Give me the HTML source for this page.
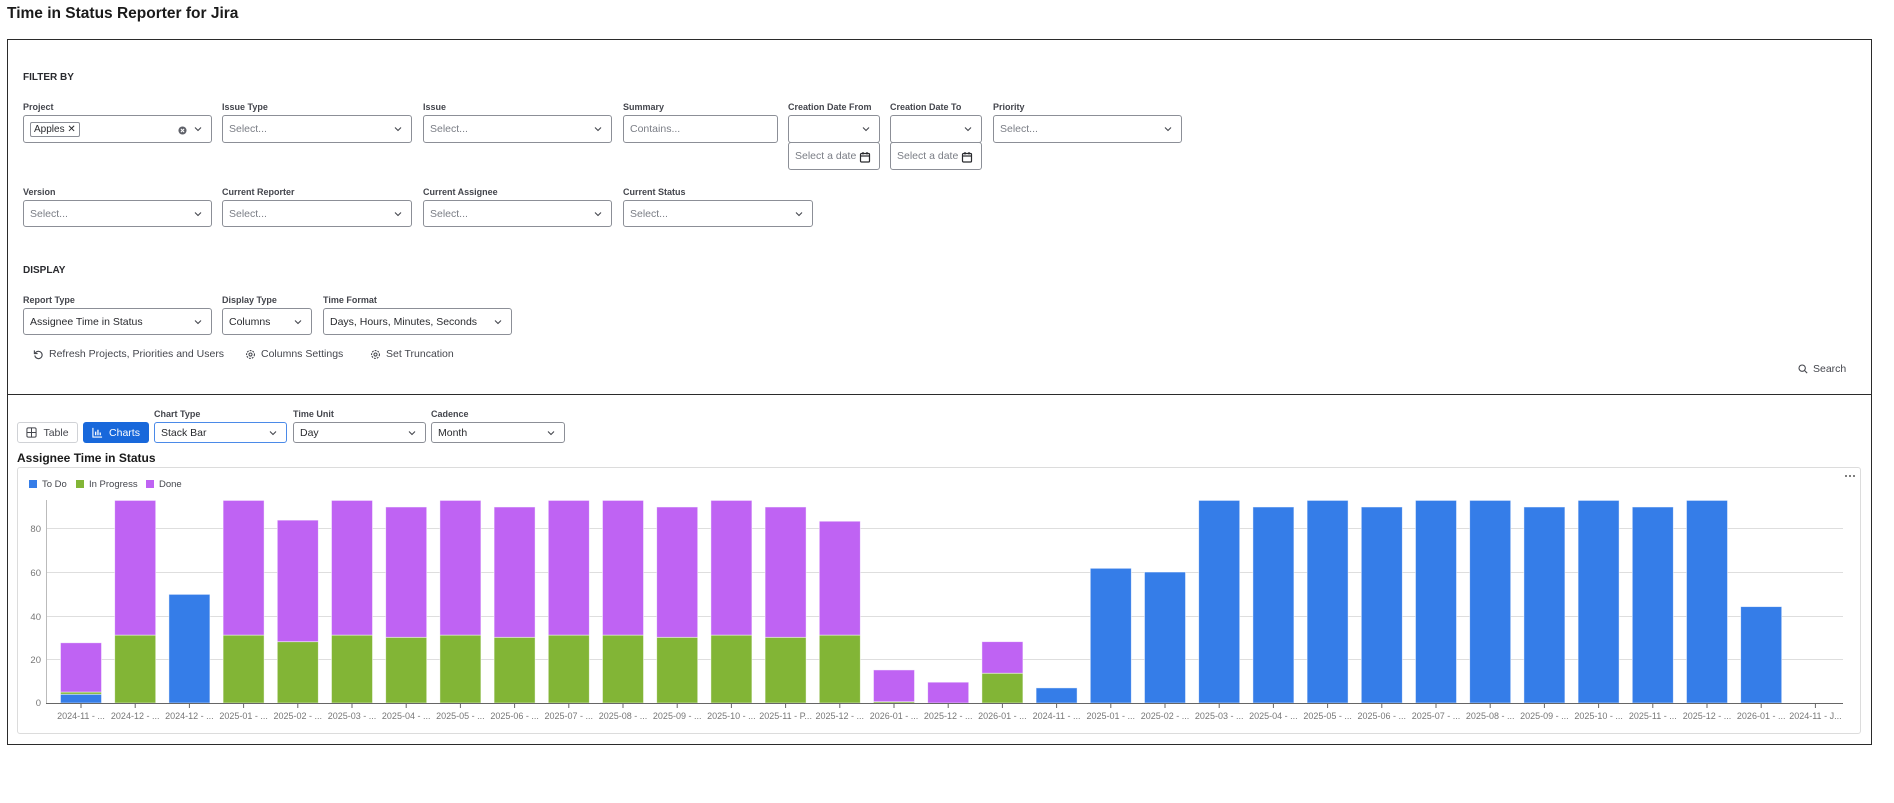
<!DOCTYPE html>
<html><head><meta charset="utf-8">
<style>
*{box-sizing:border-box}
body{margin:0;width:1894px;height:803px;background:#fff;font-family:"Liberation Sans",sans-serif;color:#172b4d;position:relative;overflow:hidden}
.a{position:absolute}
.h1{left:7px;top:5px;font-size:15.5px;font-weight:bold;color:#1a1a1a}
.panel{position:absolute;left:7px;width:1865px;border:1px solid #2b2b2b}
.sec{font-size:10px;font-weight:bold;color:#292a2e}
.lbl{font-size:9px;font-weight:600;color:#44464d}
.in{position:absolute;border:1px solid #8c8f97;border-radius:3px;background:#fff;font-size:10.5px;color:#7a7d85;padding-left:6px;display:flex;align-items:center}
.in.dark{color:#292a2e}
.chev{position:absolute;right:9px;top:50%;margin-top:-3px;width:8px;height:6px}
.act{font-size:10.5px;color:#44464d;display:flex;align-items:center;gap:5px}
.btn{position:absolute;border-radius:3px;font-size:10.5px;display:flex;align-items:center;justify-content:center;gap:6px}
</style></head><body>
<div class="a h1">Time in Status Reporter for Jira</div>

<div class="panel" style="top:39px;height:356px"></div>
<div class="panel" style="top:394px;height:351px"></div>

<div class="a sec" style="left:23px;top:72px">FILTER BY</div>

<div class="a lbl" style="left:23px;top:102px">Project</div>
<div class="a lbl" style="left:222px;top:102px">Issue Type</div>
<div class="a lbl" style="left:423px;top:102px">Issue</div>
<div class="a lbl" style="left:623px;top:102px">Summary</div>
<div class="a lbl" style="left:788px;top:102px">Creation Date From</div>
<div class="a lbl" style="left:890px;top:102px">Creation Date To</div>
<div class="a lbl" style="left:993px;top:102px">Priority</div>

<svg width="0" height="0" style="position:absolute"><defs><symbol id="cv" viewBox="0 0 8 6"><path d="M1 1.5 L4 4.5 L7 1.5" fill="none" stroke="#44464d" stroke-width="1.1"/></symbol><symbol id="cal" viewBox="0 0 12 12"><rect x="1.5" y="2.5" width="9" height="8.5" rx="1" fill="none" stroke="#292a2e" stroke-width="1.2"/><line x1="1.5" y1="5" x2="10.5" y2="5" stroke="#292a2e" stroke-width="1.2"/><line x1="4" y1="1" x2="4" y2="3.5" stroke="#292a2e" stroke-width="1.2"/><line x1="8" y1="1" x2="8" y2="3.5" stroke="#292a2e" stroke-width="1.2"/></symbol></defs></svg>

<div class="in" style="left:23px;top:115px;width:189px;height:28px"><span style="border:1px solid #8c8f97;border-radius:2px;padding:1px 3px;color:#292a2e;font-size:10px">Apples ✕</span>
<svg style="position:absolute;right:24px;top:10px" width="9" height="9" viewBox="0 0 10 10"><circle cx="5" cy="5" r="4.5" fill="#5e6068"/><path d="M3.2 3.2L6.8 6.8M6.8 3.2L3.2 6.8" stroke="#fff" stroke-width="1.2"/></svg>
<svg class="chev"><use href="#cv"/></svg></div>
<div class="in" style="left:222px;top:115px;width:190px;height:28px">Select...<svg class="chev"><use href="#cv"/></svg></div>
<div class="in" style="left:423px;top:115px;width:189px;height:28px">Select...<svg class="chev"><use href="#cv"/></svg></div>
<div class="in" style="left:623px;top:115px;width:155px;height:28px">Contains...</div>
<div class="in" style="left:788px;top:115px;width:92px;height:28px"><svg class="chev"><use href="#cv"/></svg></div>
<div class="in" style="left:890px;top:115px;width:92px;height:28px"><svg class="chev"><use href="#cv"/></svg></div>
<div class="in" style="left:993px;top:115px;width:189px;height:28px">Select...<svg class="chev"><use href="#cv"/></svg></div>
<div class="in" style="left:788px;top:142px;width:92px;height:28px">Select a date<svg style="position:absolute;right:8px;top:8px" width="12" height="12"><use href="#cal"/></svg></div>
<div class="in" style="left:890px;top:142px;width:92px;height:28px">Select a date<svg style="position:absolute;right:8px;top:8px" width="12" height="12"><use href="#cal"/></svg></div>

<div class="a lbl" style="left:23px;top:187px">Version</div>
<div class="a lbl" style="left:222px;top:187px">Current Reporter</div>
<div class="a lbl" style="left:423px;top:187px">Current Assignee</div>
<div class="a lbl" style="left:623px;top:187px">Current Status</div>
<div class="in" style="left:23px;top:200px;width:189px;height:27px">Select...<svg class="chev"><use href="#cv"/></svg></div>
<div class="in" style="left:222px;top:200px;width:190px;height:27px">Select...<svg class="chev"><use href="#cv"/></svg></div>
<div class="in" style="left:423px;top:200px;width:189px;height:27px">Select...<svg class="chev"><use href="#cv"/></svg></div>
<div class="in" style="left:623px;top:200px;width:190px;height:27px">Select...<svg class="chev"><use href="#cv"/></svg></div>

<div class="a sec" style="left:23px;top:265px">DISPLAY</div>
<div class="a lbl" style="left:23px;top:295px">Report Type</div>
<div class="a lbl" style="left:222px;top:295px">Display Type</div>
<div class="a lbl" style="left:323px;top:295px">Time Format</div>
<div class="in dark" style="left:23px;top:308px;width:189px;height:27px">Assignee Time in Status<svg class="chev"><use href="#cv"/></svg></div>
<div class="in dark" style="left:222px;top:308px;width:90px;height:27px">Columns<svg class="chev"><use href="#cv"/></svg></div>
<div class="in dark" style="left:323px;top:308px;width:189px;height:27px">Days, Hours, Minutes, Seconds<svg class="chev"><use href="#cv"/></svg></div>

<div class="a act" style="left:33px;top:348px"><svg width="11" height="11" viewBox="0 0 12 12"><path d="M2.5 4.5A4 4 0 1 1 2 7" fill="none" stroke="#44464d" stroke-width="1.2"/><path d="M1.5 1.5V5H5" fill="none" stroke="#44464d" stroke-width="1.2"/></svg>Refresh Projects, Priorities and Users</div>
<div class="a act" style="left:245px;top:348px"><svg width="11" height="11" viewBox="0 0 12 12"><circle cx="6" cy="6" r="4.3" fill="none" stroke="#44464d" stroke-width="1.2" stroke-dasharray="2 1.2"/><circle cx="6" cy="6" r="1.7" fill="none" stroke="#44464d" stroke-width="1.1"/></svg>Columns Settings</div>
<div class="a act" style="left:370px;top:348px"><svg width="11" height="11" viewBox="0 0 12 12"><circle cx="6" cy="6" r="4.3" fill="none" stroke="#44464d" stroke-width="1.2" stroke-dasharray="2 1.2"/><circle cx="6" cy="6" r="1.7" fill="none" stroke="#44464d" stroke-width="1.1"/></svg>Set Truncation</div>
<div class="a act" style="left:1798px;top:363px"><svg width="10" height="10" viewBox="0 0 12 12"><circle cx="5" cy="5" r="3.8" fill="none" stroke="#44464d" stroke-width="1.3"/><path d="M8 8L11 11" stroke="#44464d" stroke-width="1.3"/></svg>Search</div>

<!-- panel 2 -->
<div class="btn" style="left:17px;top:422px;width:61px;height:21px;border:1px solid #d0d2d6;color:#44464d"><svg width="11" height="11" viewBox="0 0 12 12"><rect x="1" y="1" width="10" height="10" rx="1.5" fill="none" stroke="#44464d" stroke-width="1.1"/><path d="M6 1V11M1 6H11" stroke="#44464d" stroke-width="1.1"/></svg>Table</div>
<div class="btn" style="left:83px;top:422px;width:66px;height:21px;background:#1868db;color:#fff"><svg width="11" height="11" viewBox="0 0 12 12"><path d="M1 1V11H11" fill="none" stroke="#fff" stroke-width="1.2"/><path d="M4 9V5M6.5 9V3M9 9V6" stroke="#fff" stroke-width="1.4"/></svg>Charts</div>
<div class="a lbl" style="left:154px;top:409px">Chart Type</div>
<div class="a lbl" style="left:293px;top:409px">Time Unit</div>
<div class="a lbl" style="left:431px;top:409px">Cadence</div>
<div class="in dark" style="left:154px;top:422px;width:133px;height:21px;border:1.5px solid #4b8ae8">Stack Bar<svg class="chev"><use href="#cv"/></svg></div>
<div class="in dark" style="left:293px;top:422px;width:133px;height:21px">Day<svg class="chev"><use href="#cv"/></svg></div>
<div class="in dark" style="left:431px;top:422px;width:134px;height:21px">Month<svg class="chev"><use href="#cv"/></svg></div>
<div class="a" style="left:17px;top:451px;font-size:12px;font-weight:bold;color:#1a1a1a">Assignee Time in Status</div>

<div class="a" style="left:17px;top:467px;width:1844px;height:267px;border:1px solid #dcdcdc;border-radius:3px"></div>

<svg class="a" style="left:0;top:0" width="1894" height="803" font-family="Liberation Sans, sans-serif">
<g fill="#555"><circle cx="1846" cy="476" r="1"/><circle cx="1850" cy="476" r="1"/><circle cx="1854" cy="476" r="1"/></g>
<g font-size="9.5" fill="#44464d">
<rect x="29" y="480" width="8" height="8" fill="#357de8"/><text x="42" y="487">To Do</text>
<rect x="76" y="480" width="8" height="8" fill="#82b536"/><text x="89" y="487">In Progress</text>
<rect x="146" y="480" width="8" height="8" fill="#bf63f3"/><text x="159" y="487">Done</text>
</g>
<g stroke="#dedede" stroke-width="1">
<line x1="46" y1="528.5" x2="1843" y2="528.5"/><line x1="46" y1="572.5" x2="1843" y2="572.5"/><line x1="46" y1="616.5" x2="1843" y2="616.5"/><line x1="46" y1="659.5" x2="1843" y2="659.5"/>
</g>
<line x1="46.5" y1="500" x2="46.5" y2="703" stroke="#bbb"/>
<g font-size="9.5" fill="#777" text-anchor="end">
<text x="41" y="532">80</text><text x="41" y="576">60</text><text x="41" y="620">40</text><text x="41" y="663">20</text><text x="41" y="706">0</text>
</g>
<g id="bars"></g>
<line x1="46" y1="703.5" x2="1843" y2="703.5" stroke="#666"/>
<g id="ticks" stroke="#666"></g>
<g font-size="9" fill="#777" text-anchor="middle">
<text x="81" y="719">2024-11 - ...</text><text x="135.2" y="719">2024-12 - ...</text><text x="189.4" y="719">2024-12 - ...</text><text x="243.6" y="719">2025-01 - ...</text><text x="297.8" y="719">2025-02 - ...</text><text x="352" y="719">2025-03 - ...</text><text x="406.2" y="719">2025-04 - ...</text><text x="460.4" y="719">2025-05 - ...</text><text x="514.6" y="719">2025-06 - ...</text><text x="568.8" y="719">2025-07 - ...</text><text x="623" y="719">2025-08 - ...</text><text x="677.2" y="719">2025-09 - ...</text><text x="731.4" y="719">2025-10 - ...</text><text x="785.6" y="719">2025-11 - P...</text><text x="839.8" y="719">2025-12 - ...</text><text x="894" y="719">2026-01 - ...</text><text x="948.2" y="719">2025-12 - ...</text><text x="1002.4" y="719">2026-01 - ...</text><text x="1056.6" y="719">2024-11 - ...</text><text x="1110.8" y="719">2025-01 - ...</text><text x="1165" y="719">2025-02 - ...</text><text x="1219.2" y="719">2025-03 - ...</text><text x="1273.4" y="719">2025-04 - ...</text><text x="1327.6" y="719">2025-05 - ...</text><text x="1381.8" y="719">2025-06 - ...</text><text x="1436" y="719">2025-07 - ...</text><text x="1490.2" y="719">2025-08 - ...</text><text x="1544.4" y="719">2025-09 - ...</text><text x="1598.6" y="719">2025-10 - ...</text><text x="1652.8" y="719">2025-11 - ...</text><text x="1707" y="719">2025-12 - ...</text><text x="1761.2" y="719">2026-01 - ...</text><text x="1815.4" y="719">2024-11 - J...</text>
</g>
</svg>
<script>
var d=[[4,1,22.5],[0,31,61.5],[49.6,0,0],[0,31,61.5],[0,28,55.5],[0,31,61.5],[0,30,59.5],[0,31,61.5],[0,30,59.5],[0,31,61.5],[0,31,61.5],[0,30,59.5],[0,31,61.5],[0,30,59.5],[0,31,52],[0,0.6,14.5],[0,0,9.5],[0,13.6,14.4],[6.9,0,0],[61.5,0,0],[59.8,0,0],[92.5,0,0],[89.5,0,0],[92.5,0,0],[89.5,0,0],[92.5,0,0],[92.5,0,0],[89.5,0,0],[92.5,0,0],[89.5,0,0],[92.5,0,0],[44,0,0],[0,0,0]];
var c=["#357de8","#82b536","#bf63f3"],s="",t="",k=2.19;
d.forEach(function(v,i){var cx=81+54.2*i,y=703;t+='<line x1="'+cx+'" y1="703" x2="'+cx+'" y2="708"/>';
for(var j=0;j<3;j++){if(v[j]>0){var h=v[j]*k;y-=h;s+='<rect x="'+(cx-20.5)+'" y="'+y+'" width="41" height="'+h+'" fill="'+c[j]+'" stroke="rgba(255,255,255,0.6)" stroke-width="0.8"/>';}}});
document.getElementById("bars").innerHTML=s;document.getElementById("ticks").innerHTML=t;
</script>
</body></html>
